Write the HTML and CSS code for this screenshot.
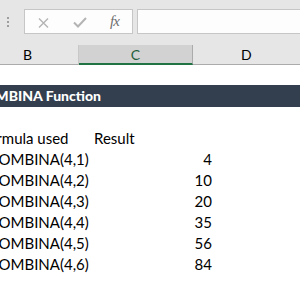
FILE: index.html
```html
<!DOCTYPE html>
<html lang="en">
<head>
    <meta charset="UTF-8">
    <title>COMBINA Function</title>
    <link rel="stylesheet" href="styles.css">
</head>
<body>
<!-- Formula bar -->
<div class="formula-bar">
    <div class="grip"><span></span><span></span><span></span></div>
    <div class="fx-buttons">
        <svg class="btn-cancel" width="11" height="10" viewBox="0 0 11 10">
            <path d="M1 0.5 L10 9.5 M10 0.5 L1 9.5" stroke="#b4b4b4" stroke-width="1.4" fill="none"/>
        </svg>
        <svg class="btn-enter" width="14" height="11" viewBox="0 0 14 11">
            <path d="M1 5.5 L5 9.5 L13 1" stroke="#b4b4b4" stroke-width="2" fill="none"/>
        </svg>
        <span class="btn-fx">fx</span>
    </div>
    <div class="formula-input"></div>
</div>

<!-- Column headers -->
<div class="col-heads">
    <div class="col-head">B</div>
    <div class="col-head selected">C</div>
    <div class="col-head">D</div>
</div>

<!-- Sheet cells -->
<div class="grid">
    <div class="row"></div>
    <div class="row title-row"><div class="cell">COMBINA Function</div></div>
    <div class="row"></div>
    <div class="row data-row">
        <div class="cell">Formula used</div>
        <div class="cell">Result</div>
    </div>
    <div class="row data-row"><div class="cell">=COMBINA(4,1)</div><div class="cell num">4</div></div>
    <div class="row data-row"><div class="cell">=COMBINA(4,2)</div><div class="cell num">10</div></div>
    <div class="row data-row"><div class="cell">=COMBINA(4,3)</div><div class="cell num">20</div></div>
    <div class="row data-row"><div class="cell">=COMBINA(4,4)</div><div class="cell num">35</div></div>
    <div class="row data-row"><div class="cell">=COMBINA(4,5)</div><div class="cell num">56</div></div>
    <div class="row data-row"><div class="cell">=COMBINA(4,6)</div><div class="cell num">84</div></div>
</div>
</body>
</html>
```

FILE: styles.css
```css
body {
    margin: 0;
    width: 300px;
    height: 294px;
    overflow: hidden;
    background: #fff;
    font-family: Lato, "Liberation Sans", sans-serif;
    color: #000;
}

.formula-bar {
    height: 45px;
    box-sizing: border-box;
    padding-top: 9px;
    background: #e6e6e6;
    display: flex;
    align-items: flex-start;
}

.grip {
    width: 24px;
    display: flex;
    flex-direction: column;
    align-items: center;
    gap: 2px;
    padding-top: 8px;
    box-sizing: border-box;
    padding-right: 8px;
}

.grip span {
    width: 2px;
    height: 2px;
    background: #9e9e9e;
}

.fx-buttons {
    width: 109px;
    height: 25px;
    box-sizing: border-box;
    border: 1px solid #c6c6c6;
    background: #fdfdfd;
    position: relative;
}

.fx-buttons svg,
.btn-fx {
    position: absolute;
}

.btn-cancel {
    left: 13px;
    top: 8px;
}

.btn-enter {
    left: 48px;
    top: 7px;
}

.btn-fx {
    left: 85px;
    top: 3px;
    font-family: "Liberation Serif", "Times New Roman", serif;
    font-style: italic;
    font-size: 15px;
    color: #6e6e6e;
    letter-spacing: -1px;
}

.formula-input {
    flex: 1;
    height: 25px;
    box-sizing: border-box;
    margin-left: 4px;
    margin-right: -4px;
    border: 1px solid #c6c6c6;
    background: #fdfdfd;
}

.col-heads {
    display: flex;
    margin-left: -23px;
    height: 20px;
    background: #e6e6e6;
}

.col-head {
    box-sizing: border-box;
    height: 20px;
    border-bottom: 1px solid #ababab;
    border-right: 1px solid #c8c8c8;
    text-align: center;
    font-size: 14px;
    line-height: 19px;
    color: #000;
}

.col-head:nth-child(1) { width: 114px; }
.col-head:nth-child(2) { width: 127px; }
.col-head:nth-child(3) { width: 120px; border-right: none; }

.col-head.selected {
    background: #d2d2d2;
    color: #1f5e3c;
    border-bottom: 2px solid #217346;
    border-right: 1px solid #ababab;
}

.grid {
    margin-left: -23px;
}

.row {
    height: 20px;
    display: flex;
    font-size: 15px;
}

.row .cell {
    box-sizing: border-box;
    padding: 0 3px;
    white-space: nowrap;
}

.row .cell:nth-child(1) { width: 114px; }
.row .cell:nth-child(2) { width: 124px; }

.title-row {
    height: 22px;
    background: #333f4f;
    color: #fff;
    font-weight: 900;
    font-size: 14px;
    line-height: 22px;
}

.title-row .cell {
    padding-left: 0;
    margin-left: -2px;
}

.data-row {
    height: 21px;
    box-sizing: border-box;
    padding-top: 2px;
    line-height: 18px;
}

.num {
    text-align: right;
}
```
